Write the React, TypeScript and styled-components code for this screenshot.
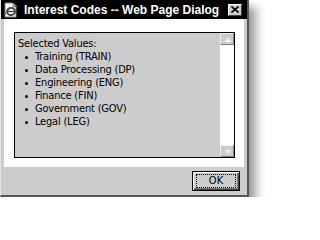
import styled, { createGlobalStyle } from "styled-components";

const GlobalStyle = createGlobalStyle`
  html, body {
    margin: 0;
    padding: 0;
    background: #ffffff;
  }
  body {
    font-family: "DejaVu Sans Condensed", "DejaVu Sans", sans-serif;
    font-stretch: condensed;
    font-size: 11px;
    color: #000;
  }
`;

const Window = styled.div`
  width: 249px;
  height: 197px;
  box-sizing: border-box;
  background: #cccccc;
  border-left: 1px solid #e4e4e4;
  border-right: 2px solid #555555;
  border-bottom: 2px solid #555555;
  box-shadow: 7px 7px 9px rgba(0, 0, 0, 0.4);
  display: flex;
  flex-direction: column;
`;

const TitleBar = styled.div`
  height: 19px;
  background: #000000;
  display: flex;
  align-items: center;
  padding-left: 2px;
  flex-shrink: 0;
`;

const Title = styled.span`
  color: #ffffff;
  font-family: "Liberation Sans", Arial, sans-serif;
  font-stretch: normal;
  font-weight: bold;
  font-size: 12px;
  margin-left: 5px;
  white-space: nowrap;
`;

const CloseButton = styled.div`
  margin-left: auto;
  margin-right: 5px;
  width: 14px;
  height: 12px;
  box-sizing: border-box;
  background: #cccccc;
  border-top: 1px solid #ffffff;
  border-left: 1px solid #ffffff;
  border-right: 1px solid #404040;
  border-bottom: 1px solid #404040;
  display: flex;
  align-items: center;
  justify-content: center;
`;

const Body = styled.div`
  flex: 1;
  display: flex;
  flex-direction: column;
  padding: 0 3px 0 3px;
`;

const Panel = styled.div`
  background: #ffffff;
  height: 148px;
  box-sizing: border-box;
  padding: 13px 9px 9px 10px;
  display: flex;
`;

const ListBox = styled.div`
  flex: 1;
  border: 1px solid #000000;
  background: #cccccc;
  display: flex;
`;

const ListContent = styled.div`
  flex: 1;
  padding: 4px 0 0 3px;
  line-height: 13px;
  letter-spacing: -0.2px;
`;

const Items = styled.ul`
  list-style: none;
  margin: 0;
  padding: 0;
`;

const Item = styled.li`
  position: relative;
  padding-left: 17px;
  white-space: nowrap;
  &::before {
    content: "";
    position: absolute;
    left: 7px;
    top: 6px;
    width: 3px;
    height: 3px;
    border-radius: 50%;
    background: #000;
  }
`;

const ScrollBar = styled.div`
  width: 14px;
  background: #ffffff;
  display: flex;
  flex-direction: column;
  justify-content: space-between;
`;

const ScrollButton = styled.div`
  height: 12px;
  box-sizing: border-box;
  background: #cccccc;
  border-top: 1px solid #eeeeee;
  border-left: 1px solid #eeeeee;
  border-right: 1px solid #808080;
  border-bottom: 1px solid #808080;
  display: flex;
  align-items: center;
  justify-content: center;
`;

const Footer = styled.div`
  flex: 1;
  display: flex;
  justify-content: flex-end;
  align-items: flex-start;
  padding: 4px 4px 0 0;
`;

const Button = styled.button`
  width: 48px;
  height: 20px;
  box-sizing: border-box;
  padding: 0;
  background: #cccccc;
  border: 1px solid #000000;
  box-shadow: inset 1px 1px #ffffff, inset -1px -1px #404040, inset -2px -2px #808080;
  font-family: "DejaVu Sans Condensed", "DejaVu Sans", sans-serif;
  font-stretch: condensed;
  font-size: 11px;
  color: #000;
  display: flex;
  align-items: center;
  justify-content: center;
`;

const FocusRing = styled.span`
  width: 38px;
  height: 12px;
  border: 1px dotted #000000;
  display: flex;
  align-items: center;
  justify-content: center;
  line-height: 12px;
`;

function DialogIcon() {
  return (
    <svg width="16" height="16" viewBox="0 0 16 16">
      <path d="M2 1h8l3 3v11H2z" fill="#ffffff" stroke="#808080" strokeWidth="1" />
      <path d="M10 1v3h3" fill="none" stroke="#808080" strokeWidth="1" />
      <ellipse cx="8" cy="9.5" rx="4" ry="3.6" fill="none" stroke="#404040" strokeWidth="1.8" />
      <path d="M4.5 9.5h7" stroke="#404040" strokeWidth="1.4" />
      <path d="M1.5 13c2-5 8-9 13-9" fill="none" stroke="#606060" strokeWidth="1.2" />
    </svg>
  );
}

function Arrow({ up }: { up: boolean }) {
  return (
    <svg width="7" height="5" viewBox="0 0 7 5">
      {up ? (
        <>
          <path d="M1 4.5h6" stroke="#ffffff" strokeWidth="1" />
          <path d="M3.5 0.5L0.5 4h6z" fill="#eeeeee" />
        </>
      ) : (
        <>
          <path d="M0.5 1h6L3.5 4.5z" fill="#eeeeee" />
          <path d="M4 4.5l3-3.5" stroke="#ffffff" strokeWidth="1" />
        </>
      )}
    </svg>
  );
}

const values = [
  "Training (TRAIN)",
  "Data Processing (DP)",
  "Engineering (ENG)",
  "Finance (FIN)",
  "Government (GOV)",
  "Legal (LEG)",
];

export default function App() {
  return (
    <>
      <GlobalStyle />
      <Window>
        <TitleBar>
          <DialogIcon />
          <Title>Interest Codes -- Web Page Dialog</Title>
          <CloseButton>
            <svg width="8" height="7" viewBox="0 0 8 7">
              <path d="M0.5 0.5l7 6M7.5 0.5l-7 6" stroke="#000" strokeWidth="1.6" />
            </svg>
          </CloseButton>
        </TitleBar>
        <Body>
          <Panel>
            <ListBox>
              <ListContent>
                Selected Values:
                <Items>
                  {values.map((v) => (
                    <Item key={v}>{v}</Item>
                  ))}
                </Items>
              </ListContent>
              <ScrollBar>
                <ScrollButton>
                  <Arrow up />
                </ScrollButton>
                <ScrollButton>
                  <Arrow up={false} />
                </ScrollButton>
              </ScrollBar>
            </ListBox>
          </Panel>
          <Footer>
            <Button>
              <FocusRing>OK</FocusRing>
            </Button>
          </Footer>
        </Body>
      </Window>
    </>
  );
}
